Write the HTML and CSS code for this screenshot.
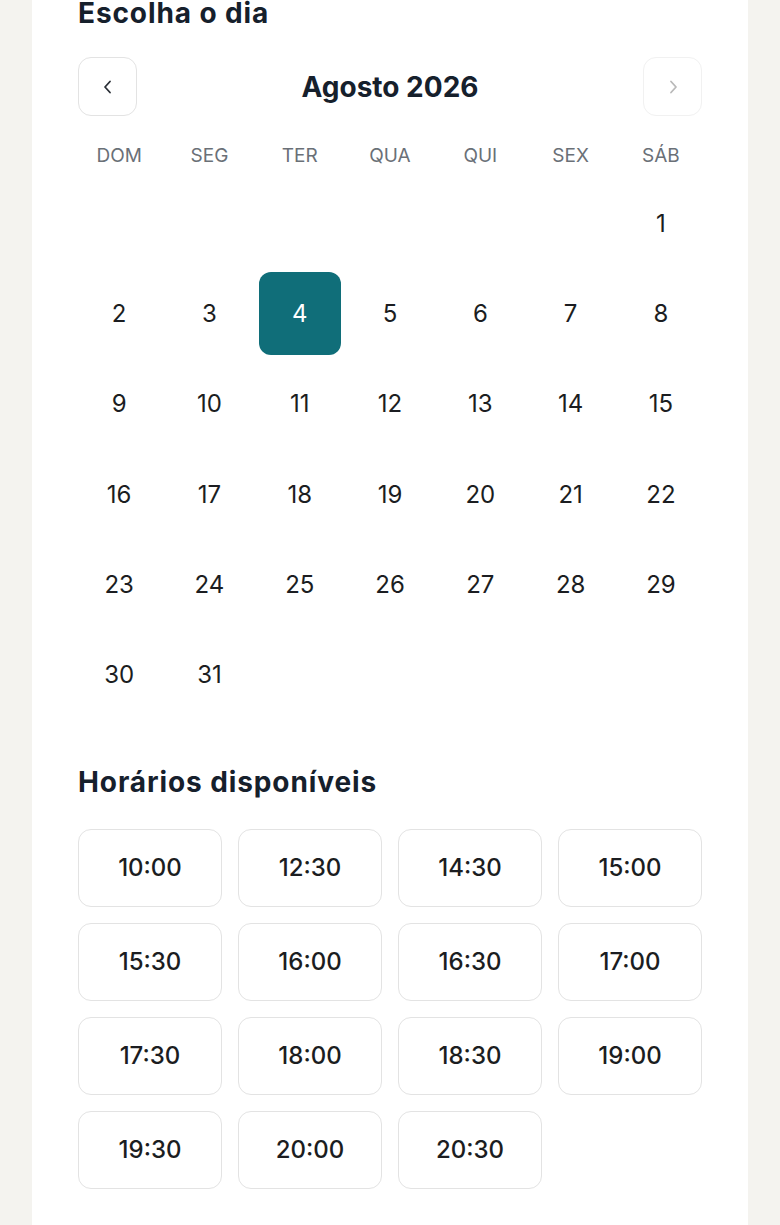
FILE: index.html
```html
<!DOCTYPE html>
<html lang="pt-BR">
<head>
  <meta charset="UTF-8">
  <meta name="viewport" content="width=device-width, initial-scale=1.0">
  <title>Agendamento</title>
  <link rel="stylesheet" href="styles.css">
</head>
<body>
  <div class="card">
    <h2 class="section-title">Escolha o dia</h2>

    <div class="month-nav">
      <button class="nav-btn">
        <svg width="14" height="14" viewBox="0 0 14 14"><path d="M9 1.5 L4 7 L9 12.5" fill="none" stroke="#2a2f36" stroke-width="1.8" stroke-linecap="round" stroke-linejoin="round"/></svg>
      </button>
      <div class="month-label">Agosto 2026</div>
      <button class="nav-btn disabled">
        <svg width="14" height="14" viewBox="0 0 14 14"><path d="M5 1.5 L10 7 L5 12.5" fill="none" stroke="#b9b9b9" stroke-width="1.8" stroke-linecap="round" stroke-linejoin="round"/></svg>
      </button>
    </div>

    <div class="weekdays">
      <span>DOM</span><span>SEG</span><span>TER</span><span>QUA</span><span>QUI</span><span>SEX</span><span>SÁB</span>
    </div>

    <div class="days">
      <span class="day empty"></span><span class="day empty"></span><span class="day empty"></span><span class="day empty"></span><span class="day empty"></span><span class="day empty"></span>
      <button class="day">1</button>
      <button class="day">2</button>
      <button class="day">3</button>
      <button class="day selected">4</button>
      <button class="day">5</button>
      <button class="day">6</button>
      <button class="day">7</button>
      <button class="day">8</button>
      <button class="day">9</button>
      <button class="day">10</button>
      <button class="day">11</button>
      <button class="day">12</button>
      <button class="day">13</button>
      <button class="day">14</button>
      <button class="day">15</button>
      <button class="day">16</button>
      <button class="day">17</button>
      <button class="day">18</button>
      <button class="day">19</button>
      <button class="day">20</button>
      <button class="day">21</button>
      <button class="day">22</button>
      <button class="day">23</button>
      <button class="day">24</button>
      <button class="day">25</button>
      <button class="day">26</button>
      <button class="day">27</button>
      <button class="day">28</button>
      <button class="day">29</button>
      <button class="day">30</button>
      <button class="day">31</button>
    </div>

    <h2 class="section-title times-title">Horários disponíveis</h2>

    <div class="times">
      <button class="time">10:00</button>
      <button class="time">12:30</button>
      <button class="time">14:30</button>
      <button class="time">15:00</button>
      <button class="time">15:30</button>
      <button class="time">16:00</button>
      <button class="time">16:30</button>
      <button class="time">17:00</button>
      <button class="time">17:30</button>
      <button class="time">18:00</button>
      <button class="time">18:30</button>
      <button class="time">19:00</button>
      <button class="time">19:30</button>
      <button class="time">20:00</button>
      <button class="time">20:30</button>
    </div>
  </div>
</body>
</html>
```

FILE: styles.css
```css
body {
  margin: 0;
  background-color: #f4f3ef;
  font-family: Inter, "Noto Sans", sans-serif;
  color: #1b1d21;
  overflow: hidden;
}
.card {
  margin: 0 32px;
  background-color: #ffffff;
  padding: 0 46px 60px;
  min-height: 1300px;
  box-sizing: border-box;
}
.section-title {
  margin: -4px 0 0;
  font-size: 28px;
  line-height: 34px;
  font-weight: 700;
  color: #16202c;
  letter-spacing: 0.9px;
}
.month-nav {
  display: flex;
  align-items: center;
  justify-content: space-between;
  margin-top: 27px;
}
.nav-btn {
  width: 59px;
  height: 59px;
  border: 1.5px solid #e3e3e3;
  border-radius: 13px;
  background: #fff;
  display: flex;
  align-items: center;
  justify-content: center;
  padding: 0;
  cursor: pointer;
}
.nav-btn.disabled {
  border-color: #f1f1f1;
  cursor: default;
}
.month-label {
  font-size: 28px;
  font-weight: 700;
  color: #16202c;
}
.weekdays {
  display: grid;
  grid-template-columns: repeat(7, 1fr);
  gap: 8px;
  margin-top: 28px;
  font-size: 19px;
  line-height: 24px;
  color: #6a7077;
  text-align: center;
}
.days {
  display: grid;
  grid-template-columns: repeat(7, 1fr);
  gap: 8px;
  margin-top: 14px;
}
.day {
  aspect-ratio: 1;
  border: none;
  background: none;
  border-radius: 12px;
  font-family: inherit;
  font-size: 24px;
  color: #1b1d21;
  padding: 0;
  cursor: pointer;
}
.day.selected {
  background-color: #106e79;
  color: #ffffff;
}
.times-title {
  margin-top: 49px;
}
.times {
  display: grid;
  grid-template-columns: repeat(4, 1fr);
  gap: 16px;
  margin-top: 30px;
}
.time {
  height: 78px;
  border: 1.5px solid #e3e3e3;
  border-radius: 13px;
  background: #fff;
  font-family: inherit;
  font-size: 24px;
  font-weight: 500;
  color: #1b1d21;
  cursor: pointer;
}
```
